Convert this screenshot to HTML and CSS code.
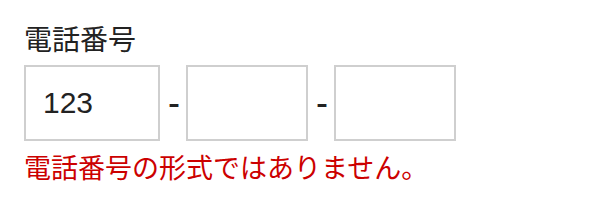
FILE: index.html
```html
<!DOCTYPE html>
<html lang="ja">

<head>
    <meta charset="UTF-8" />
    <meta name="viewport" content="width=device-width, initial-scale=1.0" />
    <title>電話番号</title>
    <link rel="stylesheet" href="styles.css">
</head>

<body>
    <div class="field">
        <label class="label" for="tel1">電話番号</label>
        <div class="tel">
            <input id="tel1" class="tel-input first" type="text" value="123">
            <span class="sep">-</span>
            <input class="tel-input" type="text">
            <span class="sep">-</span>
            <input class="tel-input" type="text">
        </div>
        <p class="error">電話番号の形式ではありません。</p>
    </div>
</body>

</html>
```

FILE: styles.css
```css
:root{
    --text: #222;
    --border: #cfcfcf;
    --error: #c00;
}

*{
    margin: 0;
    padding: 0;
    box-sizing: border-box;
}
body{
    background-color: white;
    color: var(--text);
    font-family: "Noto Sans CJK JP", "Liberation Sans", sans-serif;
}
.field{
    padding: 18px 24px;
}
.label{
    display: block;
    font-size: 28px;
    line-height: 40px;
    margin-bottom: 7px;
}
.tel{
    display: flex;
    align-items: center;
    gap: 8px;
}
.tel-input{
    width: 122px;
    height: 76px;
    border: 2px solid var(--border);
    border-radius: 0;
    padding: 0 17px;
    font-family: "Liberation Sans", sans-serif;
    font-size: 30px;
    color: var(--text);
    background-color: white;
    outline: none;
}
.tel-input.first{
    width: 136px;
}
.sep{
    width: 10px;
    text-align: center;
    font-family: "Liberation Sans", sans-serif;
    font-size: 36px;
    line-height: 1;
    color: #222;
}
.error{
    margin-top: 6px;
    font-size: 27px;
    line-height: 40px;
    color: var(--error);
}
```
